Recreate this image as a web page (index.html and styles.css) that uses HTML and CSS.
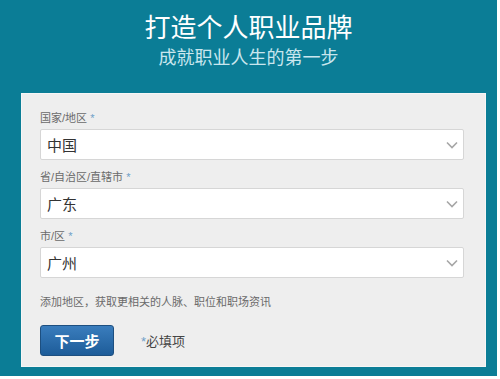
FILE: index.html
```html
<!DOCTYPE html>
<html lang="zh-CN">

<head>
    <meta charset="UTF-8">
    <meta name="viewport" content="width=device-width, initial-scale=1.0">
    <link rel="stylesheet" href="styles.css">
    <title>打造个人职业品牌</title>
</head>

<body>
    <div class="frame">
        <header class="hero">
            <h1>打造个人职业品牌</h1>
            <p>成就职业人生的第一步</p>
        </header>
        <form class="panel">
            <label class="field">
                <span class="label">国家/地区 <i>*</i></span>
                <span class="select">
                    <span>中国</span>
                    <svg width="12" height="8" viewBox="0 0 12 8"><path d="M1 1.5 6 6.5 11 1.5" fill="none" stroke="#a6a6a6" stroke-width="1.6"/></svg>
                </span>
            </label>
            <label class="field">
                <span class="label">省/自治区/直辖市 <i>*</i></span>
                <span class="select">
                    <span>广东</span>
                    <svg width="12" height="8" viewBox="0 0 12 8"><path d="M1 1.5 6 6.5 11 1.5" fill="none" stroke="#a6a6a6" stroke-width="1.6"/></svg>
                </span>
            </label>
            <label class="field">
                <span class="label">市/区 <i>*</i></span>
                <span class="select">
                    <span>广州</span>
                    <svg width="12" height="8" viewBox="0 0 12 8"><path d="M1 1.5 6 6.5 11 1.5" fill="none" stroke="#a6a6a6" stroke-width="1.6"/></svg>
                </span>
            </label>
            <p class="hint">添加地区，获取更相关的人脉、职位和职场资讯</p>
            <div class="actions">
                <button type="button">下一步</button>
                <span class="required"><i>*</i>必填项</span>
            </div>
        </form>
    </div>
</body>

</html>
```

FILE: styles.css
```css
:root {
    --font: "Liberation Sans", "Noto Sans CJK SC", sans-serif;
    --teal: #0b7d96;
    --panel: #eeeeee;
    --text: #333333;
    --muted: #6a6a6a;
    --star: #6f9fc8;
}

body {
    margin: 0;
    background-color: #ffffff;
    font-family: var(--font);
}

.frame {
    width: 497px;
    height: 376px;
    background-color: var(--teal);
    box-sizing: border-box;
    padding: 12px 11px 0 21px;
}

.hero {
    text-align: center;
    color: #ffffff;
    margin-right: 10px;
}

.hero h1 {
    margin: 0;
    font-size: 26px;
    font-weight: normal;
    line-height: 32px;
}

.hero p {
    margin: 3px 0 0;
    font-size: 18px;
    line-height: 22px;
    color: #c9e6ee;
}

.panel {
    width: 465px;
    height: 274px;
    margin-top: 24px;
    box-sizing: border-box;
    padding: 17px 21px 0 18px;
    background-color: var(--panel);
    border: 1px solid #f6f6f6;
}

.field {
    display: block;
    margin-bottom: 10px;
}

.label {
    display: block;
    font-size: 11px;
    line-height: 14px;
    color: var(--muted);
    margin-bottom: 4px;
}

i {
    font-style: normal;
    color: var(--star);
}

.select {
    display: flex;
    align-items: center;
    justify-content: space-between;
    height: 31px;
    box-sizing: border-box;
    padding: 0 5px 0 6px;
    background-color: #ffffff;
    border: 1px solid #d6d6d6;
    border-radius: 2px;
    font-size: 15px;
    color: var(--text);
}

.hint {
    margin: 14px 0 0;
    font-size: 11px;
    line-height: 20px;
    color: var(--muted);
}

.actions {
    display: flex;
    align-items: center;
    gap: 27px;
    margin-top: 13px;
}

button {
    width: 74px;
    height: 31px;
    border: 1px solid #1d4f80;
    border-radius: 3px;
    background: linear-gradient(#3a7dbd, #1d5c99);
    color: #ffffff;
    font-family: var(--font);
    font-size: 15px;
    font-weight: bold;
}

.required {
    font-size: 13px;
    color: #444444;
}
```
